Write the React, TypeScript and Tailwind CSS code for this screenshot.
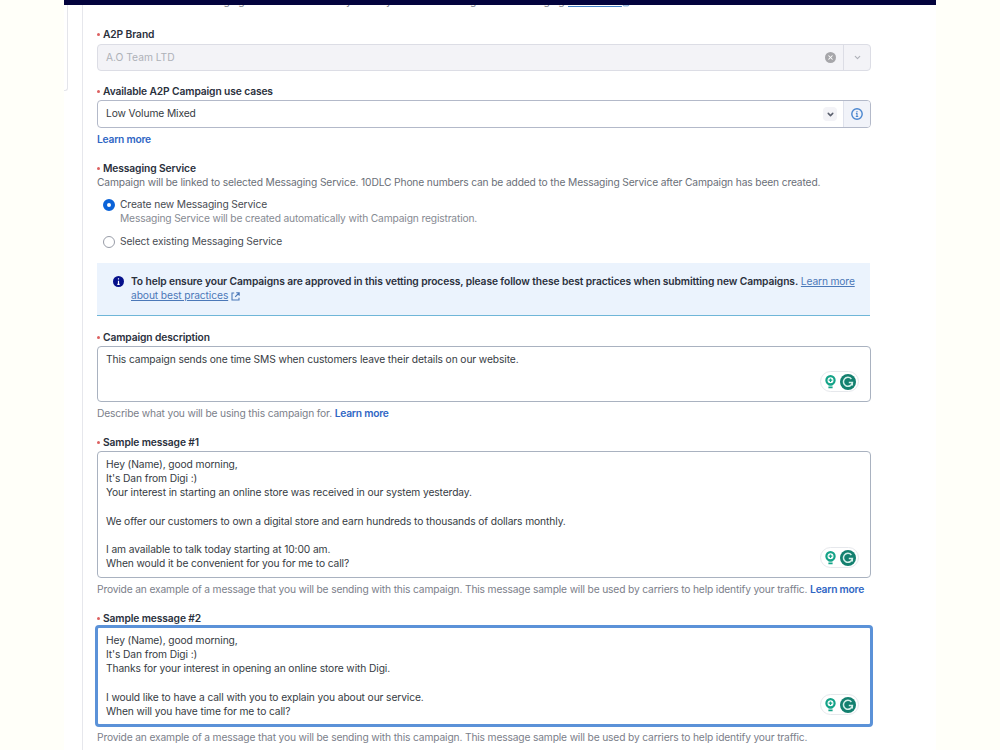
import type { ReactNode } from "react";
import { ChevronDown, ExternalLink, X } from "lucide-react";

const sample1 = `Hey (Name), good morning,
It's Dan from Digi :)
Your interest in starting an online store was received in our system yesterday.

We offer our customers to own a digital store and earn hundreds to thousands of dollars monthly.

I am available to talk today starting at 10:00 am.
When would it be convenient for you for me to call?`;

const sample2 = `Hey (Name), good morning,
It's Dan from Digi :)
Thanks for your interest in opening an online store with Digi.

I would like to have a call with you to explain you about our service.
When will you have time for me to call?`;

const sampleHelp =
  "Provide an example of a message that you will be sending with this campaign. This message sample will be used by carriers to help identify your traffic.";

function Label({ children }: { children: ReactNode }) {
  return (
    <div className="flex h-[14px] items-center font-semibold tracking-[-0.11px] whitespace-nowrap text-[#2a303c]">
      <span className="mr-[3px] h-[3px] w-[3px] rounded-full bg-[#dd6060]" />
      <span>{children}</span>
    </div>
  );
}

function LearnMore() {
  return <a className="font-semibold tracking-[-0.23px] text-[#2f66c4]">Learn more</a>;
}

function Help({ children }: { children: ReactNode }) {
  return <p className="h-[14px] tracking-[-0.16px] whitespace-nowrap text-[#7b808a]">{children}</p>;
}

function Grammarly() {
  return (
    <div className="absolute right-[11px] bottom-[9px] flex h-[21px] w-[39px] items-center justify-between rounded-full border border-[#e6e8ec] bg-white pr-[2px] pl-[4px]">
      <svg width="11" height="14" viewBox="0 0 11 14" fill="none">
        <circle cx="5.5" cy="5.2" r="4.1" stroke="#14a388" strokeWidth="2.2" />
        <path d="M5.5 3.4v3.6M3.7 5.2h3.6" stroke="#14a388" strokeWidth="1.2" />
        <path d="M3.6 9.6h3.8M3.4 12.4h4.2" stroke="#14a388" strokeWidth="1.6" />
      </svg>
      <svg width="16" height="16" viewBox="0 0 16 16" fill="none">
        <circle cx="8" cy="8" r="8" fill="#13806f" />
        <path d="M11.4 4.9A4.5 4.5 0 1 0 12.4 8.6H8.8M12.3 8.6v2.8" stroke="#d5f0ea" strokeWidth="1.5" />
      </svg>
    </div>
  );
}

function TextArea({ text, className }: { text: string; className: string }) {
  return (
    <div className={`relative rounded px-2 whitespace-pre ${className}`}>
      <p className="pt-[5px] leading-[14.15px] tracking-[-0.11px] text-[#363b43]">{text}</p>
      <Grammarly />
    </div>
  );
}

export default function App() {
  return (
    <div className="h-[750px] w-[1000px] overflow-hidden bg-[#fffff9] px-16 font-['Inter',sans-serif] text-[10.25px] leading-[14px]">
      <div className="flex h-full flex-col bg-white">
        <header className="z-10 h-[5px] shrink-0 bg-[#03033d]" />
        <div className="flex min-h-0 flex-1">
          <aside className="h-[86px] w-1 rounded-br-[3px] border-r border-b border-[#e4e5ea]" />
          <main className="ml-[14px] w-[789px] border-l border-[#e6e7ec] pl-[14px]">
            {/* intro line, scrolled under the header */}
            <div className="-mt-[11px] flex h-[14px] items-center pl-[95px] whitespace-nowrap text-[#7b808c]">
              <span className="w-[148px]">messaging</span>
              <span className="w-[40px]">by</span>
              <span className="w-[70px]">by</span>
              <span className="w-[62px]">using</span>
              <span className="w-[56px]">messaging</span>
              <a className="w-[50px] tracking-[-0.15px] whitespace-nowrap text-[#3f7ec4] underline">Learn more</a>
              <ExternalLink className="mt-[3px] ml-[4px] size-[9px] text-[#3f7ec4]" />
            </div>

            <div className="mt-[19px]">
              <Label>A2P Brand</Label>
              <div className="mt-[3px] flex h-[27px] items-center rounded border border-[#dcdde5] bg-[#f3f3f7] text-[#aeb1b8]">
                <span className="flex-1 pb-[2px] pl-2">A.O Team LTD</span>
                <span className="mr-[7px] flex size-[11px] items-center justify-center rounded-full bg-[#a6a6aa]">
                  <X className="size-[7px] text-white" strokeWidth={3.5} />
                </span>
                <span className="flex h-full w-[27px] items-center justify-center border-l border-[#dcdde5]">
                  <ChevronDown className="size-[9px]" strokeWidth={3} />
                </span>
              </div>
            </div>

            <div className="mt-[13px]">
              <Label>Available A2P Campaign use cases</Label>
              <div className="mt-[2px] flex h-[28px] items-center overflow-hidden rounded border border-[#b3b9c9] text-[#363b43]">
                <span className="flex-1 pb-[2px] pl-2 tracking-[-0.11px]">Low Volume Mixed</span>
                <span className="mr-[6px] flex size-[14px] items-center justify-center rounded-sm bg-[#f3f3f7]">
                  <ChevronDown className="size-[9px] text-[#5b606e]" strokeWidth={4} />
                </span>
                <span className="flex h-full w-[27px] items-center justify-center border-l border-[#dfe2ec] bg-[#f1f3f9]">
                  <svg width="12" height="12" viewBox="0 0 12 12" fill="none" stroke="#4a86cf">
                    <circle cx="6" cy="6" r="5.2" strokeWidth="1.4" />
                    <path d="M6 3v1.2M6 5v4M4.9 5.4H6M4.8 8.5h2.4" strokeWidth="1.1" />
                  </svg>
                </span>
              </div>
              <div className="mt-[4px] h-[14px]">
                <LearnMore />
              </div>
            </div>

            <div className="mt-[15px]">
              <Label>Messaging Service</Label>
              <p className="tracking-[-0.147px] whitespace-nowrap text-[#6a6f78]">
                Campaign will be linked to selected Messaging Service. 10DLC Phone numbers can be added to the Messaging Service after Campaign has been created.
              </p>
              <div className="mt-[8px] flex gap-[5px] pl-[6px]">
                <span className="mt-[2px] size-3 rounded-full border-4 border-[#0b63d8] bg-white" />
                <div>
                  <p className="tracking-[-0.13px] text-[#474b52]">Create new Messaging Service</p>
                  <p className="tracking-[-0.16px] text-[#868a92]">Messaging Service will be created automatically with Campaign registration.</p>
                </div>
              </div>
              <div className="mt-[9px] flex gap-[5px] pl-[6px]">
                <span className="mt-[2px] size-3 rounded-full border border-[#999da8] bg-white" />
                <p className="tracking-[-0.11px] text-[#474b52]">Select existing Messaging Service</p>
              </div>
            </div>

            <div className="mt-[15px] flex h-[53px] w-[773px] gap-[7px] border-b border-[#6fb6d8] bg-[#ebf3fd] pt-[11px] pl-[16px]">
              <svg className="mt-[2px] shrink-0" width="11" height="11" viewBox="0 0 11 11">
                <circle cx="5.5" cy="5.5" r="5.5" fill="#06108b" />
                <path d="M5.5 2.2v1.4M5.5 4.7v3.6M4.3 8.3h2.4" stroke="#fff" strokeWidth="1.2" />
              </svg>
              <p className="tracking-[-0.1px] whitespace-nowrap text-[#4b78b8]">
                <b className="font-semibold text-[#2a303c]">
                  To help ensure your Campaigns are approved in this vetting process, please follow these best practices when submitting new Campaigns.
                </b>{" "}
                <a className="tracking-[-0.15px] underline">Learn more</a>
                <br />
                <a className="underline">about best practices</a>
                <svg className="ml-[3px] inline" width="9" height="9" viewBox="0 0 9 9" fill="none" stroke="currentColor" strokeWidth="1.1">
                  <path d="M3.2 1H1v7h7V5.8M5.2.8h3v3M8 1 4.2 4.8" />
                </svg>
              </p>
            </div>

            <div className="mt-[14px]">
              <Label>Campaign description</Label>
              <TextArea
                className="mt-[2px] h-[56px] border border-[#a9b2c0]"
                text="This campaign sends one time SMS when customers leave their details on our website."
              />
              <div className="mt-[4px]">
                <Help>
                  Describe what you will be using this campaign for. <LearnMore />
                </Help>
              </div>
            </div>

            <div className="mt-[15px]">
              <Label>Sample message #1</Label>
              <TextArea className="mt-[2px] h-[127px] border border-[#a9b2c0]" text={sample1} />
              <div className="mt-[4px]">
                <Help>
                  {sampleHelp} <LearnMore />
                </Help>
              </div>
            </div>

            <div className="mt-[15px]">
              <Label>Sample message #2</Label>
              <TextArea className="-mx-[2px] h-[102px] border-3 border-[#5b92d8]" text={sample2} />
              <div className="mt-[3px]">
                <Help>{sampleHelp}</Help>
              </div>
            </div>
          </main>
        </div>
      </div>
    </div>
  );
}
